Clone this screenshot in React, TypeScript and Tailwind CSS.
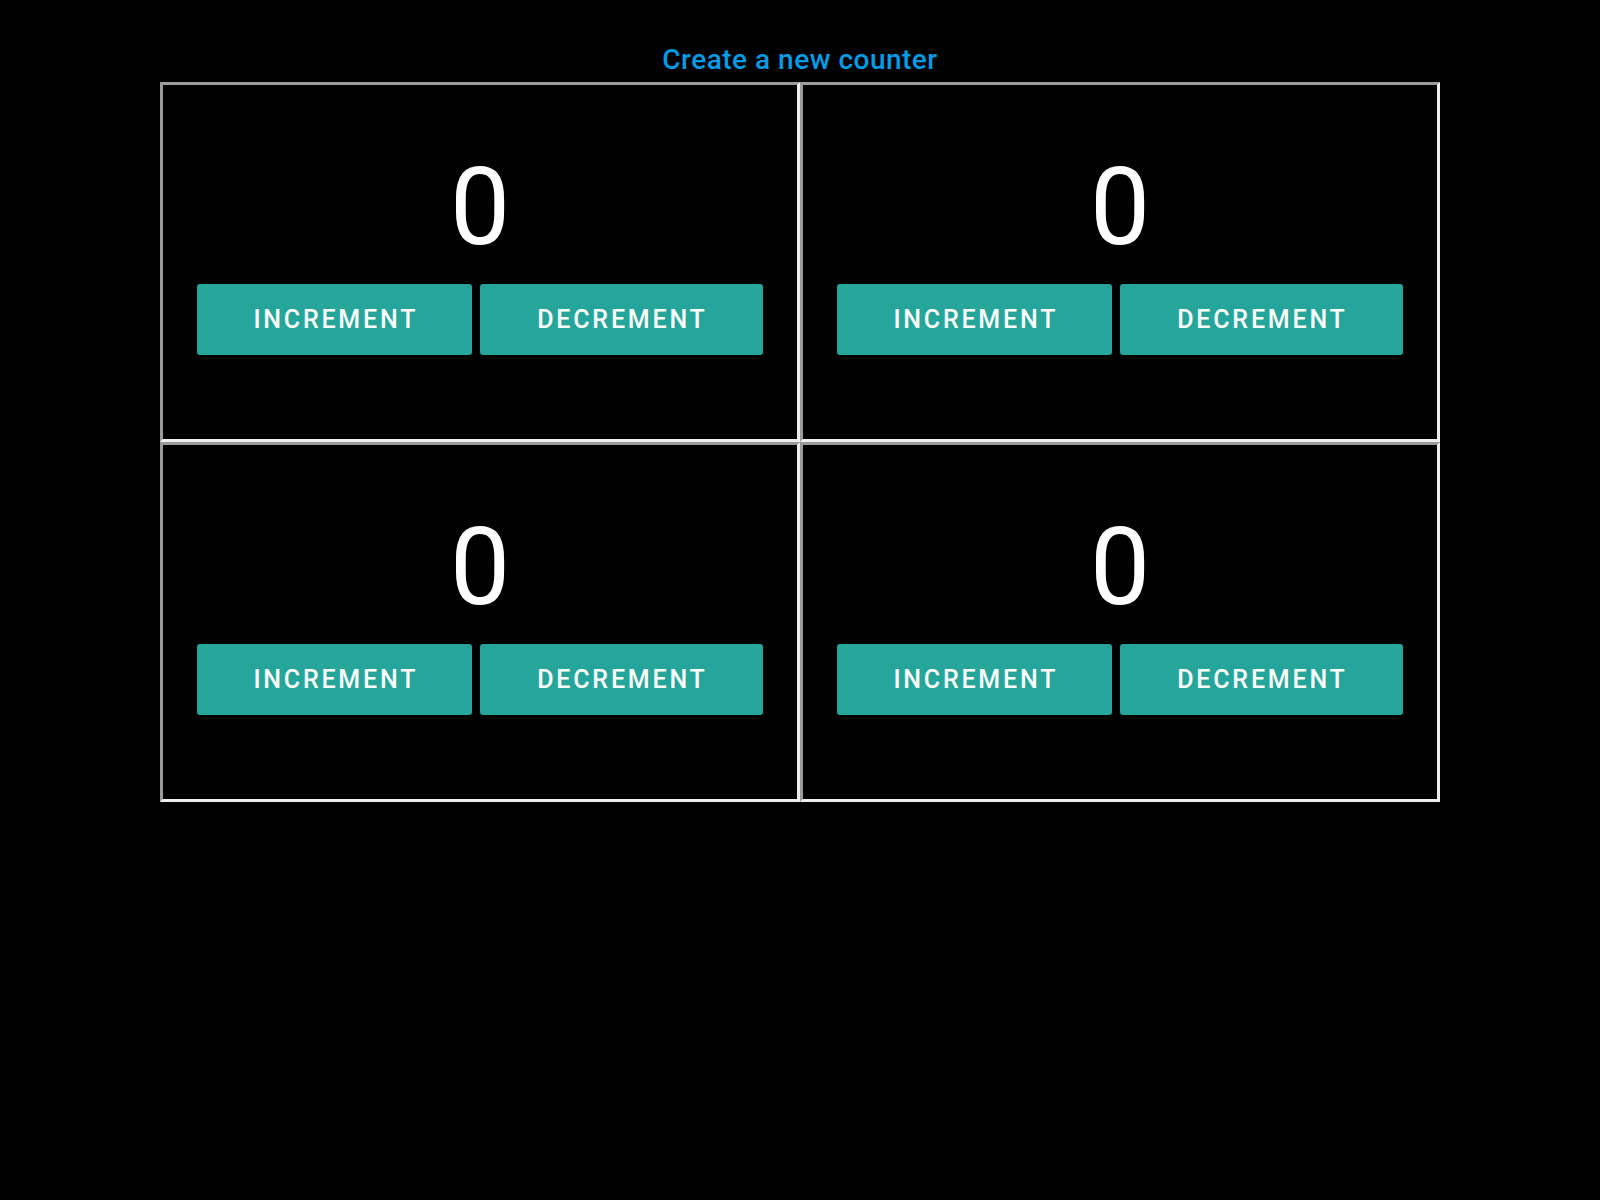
import React from "react";

function Counter() {
  return (
    <div className="h-[360px] border-[3px] border-t-[#9a9a9a] border-l-[#9a9a9a] border-r-[#eeeeee] border-b-[#eeeeee] flex flex-col items-center pt-[69px]">
      <p className="text-white text-[107px] leading-[107px]">0</p>
      <div className="mt-[23px] flex gap-[8px]">
        <button className="h-[71px] pl-[56px] pr-[54px] bg-[#26a69a] rounded-[3px] text-white text-[25px] font-medium uppercase tracking-[2.8px]">
          Increment
        </button>
        <button className="h-[71px] pl-[57px] pr-[55px] bg-[#26a69a] rounded-[3px] text-white text-[25px] font-medium uppercase tracking-[2.8px]">
          Decrement
        </button>
      </div>
    </div>
  );
}

function App() {
  return (
    <div className="bg-black min-h-screen w-full pt-[43px] font-['Roboto',sans-serif]">
      <p className="text-center text-[#039be5] text-[28px] leading-[33px] font-medium tracking-[0.5px] mb-[6px]">
        Create a new counter
      </p>
      <div className="w-[1280px] mx-auto grid grid-cols-2">
        <Counter />
        <Counter />
        <Counter />
        <Counter />
      </div>
    </div>
  );
}

export default App;
